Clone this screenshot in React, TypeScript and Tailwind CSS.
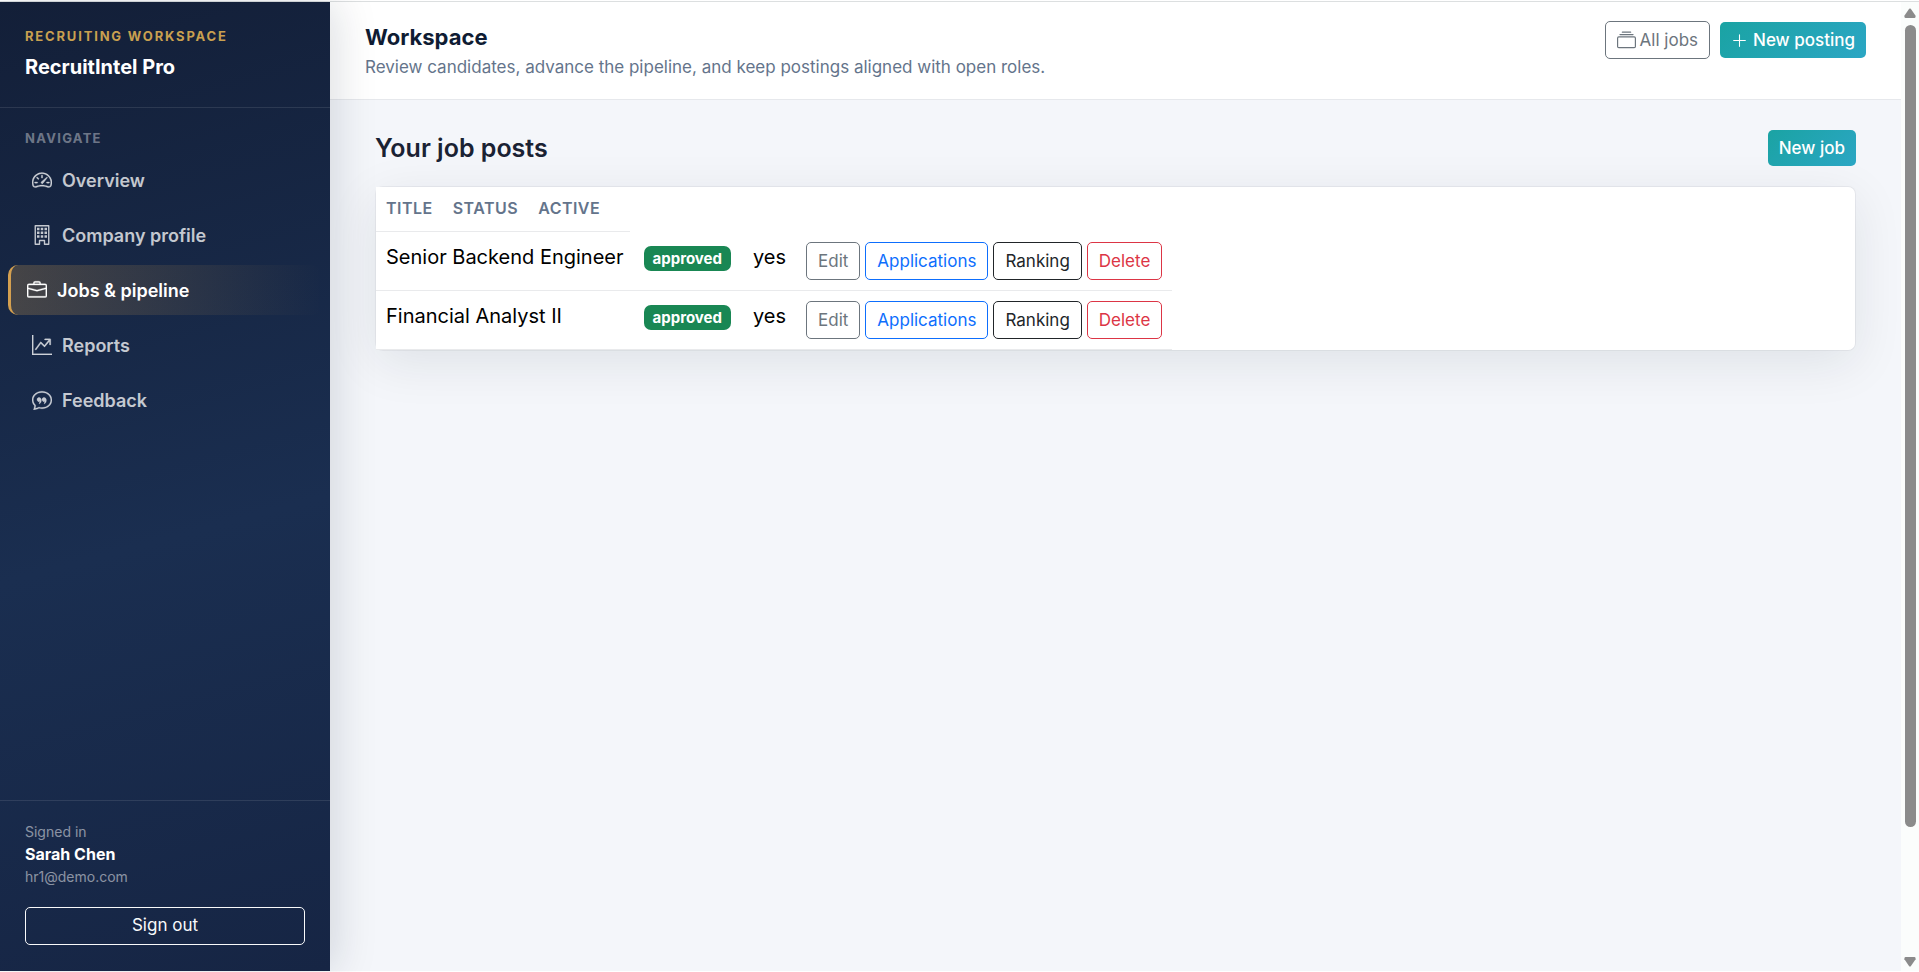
import type { ComponentType, ReactNode } from "react";
import {
  BsBriefcase,
  BsChatQuote,
  BsCollection,
  BsGraphUpArrow,
  BsPlusLg,
  BsSpeedometer2,
} from "react-icons/bs";

type IconProps = { size?: number; strokeWidth?: number };
type NavItem = { label: string; icon: ComponentType<IconProps>; active?: boolean };

function BuildingIcon({ size = 16 }: IconProps) {
  return (
    <svg width={size} height={size} viewBox="0 0 16 16" fill="none" stroke="currentColor">
      <path d="M2.6 .6H13.4V15.4H10V12.4H6V15.4H2.6Z" strokeWidth="1.1" strokeLinejoin="round" />
      <path
        d="M4 2.2h2v2H4zM7 2.2h2v2H7zM10 2.2h2v2h-2zM4 5.2h2v2H4zM7 5.2h2v2H7zM10 5.2h2v2h-2zM4 8.2h2v2H4zM7 8.2h2v2H7zM10 8.2h2v2h-2z"
        fill="currentColor"
        stroke="none"
      />
    </svg>
  );
}

const navItems: NavItem[] = [
  { label: "Overview", icon: BsSpeedometer2 },
  { label: "Company profile", icon: BuildingIcon },
  { label: "Jobs & pipeline", icon: BsBriefcase, active: true },
  { label: "Reports", icon: BsGraphUpArrow },
  { label: "Feedback", icon: BsChatQuote },
];

const jobs = [
  { title: "Senior Backend Engineer", status: "approved", active: "yes" },
  { title: "Financial Analyst II", status: "approved", active: "yes" },
];

const outline = {
  gray: "border-[#6c757d] text-[#6c757d]",
  blue: "border-[#0d6efd] text-[#0d6efd]",
  dark: "border-[#212529] text-[#212529]",
  red: "border-[#dc3545] text-[#dc3545]",
};

function OutlineButton({ tone, children }: { tone: keyof typeof outline; children: ReactNode }) {
  return (
    <button
      type="button"
      className={`flex h-[38px] items-center gap-1 rounded-[5px] border px-[11px] text-[17px] leading-[26px] ${outline[tone]}`}
    >
      {children}
    </button>
  );
}

function PrimaryButton({ children }: { children: ReactNode }) {
  return (
    <button
      type="button"
      className="flex h-9 items-center gap-[5px] rounded-[5px] bg-linear-135 from-[#1aa3a3] to-[#2ba6c4] px-[11px] text-[17px] leading-[26px] font-medium text-white"
    >
      {children}
    </button>
  );
}

function Sidebar() {
  return (
    <aside className="relative z-10 flex w-[330px] shrink-0 flex-col bg-[linear-gradient(165deg,#131f38_0%,#1a2e50_55%,#162544_100%)] shadow-[5px_0_40px_rgba(15,28,46,0.15)]">
      <div className="border-b border-white/10 px-[25px] pt-6 pb-[25px]">
        <p className="text-[13px] leading-5 font-bold tracking-[0.14em] text-[#c9a050]">
          RECRUITING WORKSPACE
        </p>
        <p className="mt-1.5 text-[20px] leading-[30px] font-bold text-white">
          RecruitIntel Pro
        </p>
      </div>
      <nav aria-labelledby="nav-heading" className="flex-1 px-2 pt-5">
        <h2
          id="nav-heading"
          className="px-[17px] text-[13px] leading-5 font-bold tracking-[0.1em] text-white/40"
        >
          NAVIGATE
        </h2>
        <ul className="mt-[7px] flex flex-col gap-[5px]">
          {navItems.map(({ label, icon: Icon, active }) => (
            <li key={label}>
              <a
                href="#"
                aria-current={active ? "page" : undefined}
                className={
                  active
                    ? "flex h-[50px] items-center gap-2.5 rounded-[10px] border-l-[3px] border-[#d4a050] bg-linear-to-r from-[#d4a050]/25 to-transparent pl-4 text-[18px] font-semibold text-white"
                    : "flex h-[50px] items-center gap-2.5 rounded-[10px] pl-6 text-[18px] font-semibold text-white/75"
                }
              >
                <Icon size={20} strokeWidth={0.25} />
                {label}
              </a>
            </li>
          ))}
        </ul>
      </nav>
      <div className="border-t border-white/10 px-[25px] pt-5 pb-[26px]">
        <p className="text-[14px] leading-[22px] text-white/50">Signed in</p>
        <p className="text-[16px] leading-[23px] font-bold text-white">Sarah Chen</p>
        <p className="text-[14px] leading-[22px] text-white/50">hr1@demo.com</p>
        <button
          type="button"
          className="mt-[19px] h-[38px] w-full rounded-[5px] border border-[#f8f9fa] text-[17px] text-[#f8f9fa]"
        >
          Sign out
        </button>
      </div>
    </aside>
  );
}

function JobsTable() {
  return (
    <div className="rounded-lg border border-[#0f1c2e]/5 bg-white bg-clip-padding shadow-[0_12px_50px_rgba(15,28,46,0.09)]">
      <table className="block border-collapse text-left">
        <thead className="block text-[16px] leading-[22px] tracking-[0.03em] text-[#64748b]">
          <tr>
            {["TITLE", "STATUS", "ACTIVE", ""].map((heading) => (
              <th key={heading} className="border-b border-[#e9eaec] bg-white px-2.5 pt-2.5 pb-3 font-semibold">
                {heading}
              </th>
            ))}
          </tr>
        </thead>
        <tbody className="block text-[20px] leading-[30px] text-black">
          {jobs.map((job) => (
            <tr key={job.title} className="align-top">
              <td className="border-b border-[#e9eaec] bg-white p-2.5">{job.title}</td>
              <td className="border-b border-[#e9eaec] py-2.5 pr-3 pl-2.5">
                <span className="inline-block rounded-[7px] bg-[#198754] px-[9px] py-1 align-middle text-[15px] leading-[17px] font-bold text-white">
                  {job.status}
                </span>
              </td>
              <td className="border-b border-[#e9eaec] p-2.5">{job.active}</td>
              <td className="border-b border-[#e9eaec] p-2.5">
                <div className="flex gap-[5px]">
                  <OutlineButton tone="gray">Edit</OutlineButton>
                  <OutlineButton tone="blue">Applications</OutlineButton>
                  <OutlineButton tone="dark">Ranking</OutlineButton>
                  <OutlineButton tone="red">Delete</OutlineButton>
                </div>
              </td>
            </tr>
          ))}
        </tbody>
      </table>
    </div>
  );
}

function ScrollTrack() {
  return (
    <div aria-hidden="true" className="flex w-[18px] shrink-0 flex-col items-center bg-[#fbfdfc] pt-1.5 pb-1">
      <svg viewBox="0 0 12 10" className="h-2.5 w-3" fill="#8b8b8b">
        <path d="M5.2 .8Q6 0 6.8 .8L11.6 7.8Q12 9.6 10.6 10H1.4Q0 9.6 .4 7.8Z" />
      </svg>
      <div className="mt-[7px] flex w-full flex-1 flex-col items-center">
        <div className="h-[86%] w-[11px] rounded-full bg-[#8b8b8b]" />
      </div>
      <svg viewBox="0 0 12 10" className="h-2.5 w-3" fill="#8b8b8b">
        <path d="M5.2 9.2Q6 10 6.8 9.2L11.6 2.2Q12 .4 10.6 0H1.4Q0 .4 .4 2.2Z" />
      </svg>
    </div>
  );
}

export default function App() {
  return (
    <div className="h-screen bg-white py-px font-['Inter',sans-serif]">
      <div className="flex h-full border-t border-[#dcdfe0]">
        <Sidebar />
        <div className="flex min-w-0 flex-1 flex-col bg-[#f4f6fa]">
          <header className="flex items-start justify-between border-b border-[#e6e8ec] bg-white px-[35px] pt-[19px] pb-[19px]">
            <div>
              <h1 className="text-[22px] leading-[33px] font-bold text-[#0f1c33]">Workspace</h1>
              <p className="text-[17px] leading-[26px] text-[#64748b]">
                Review candidates, advance the pipeline, and keep postings aligned with open roles.
              </p>
            </div>
            <div className="flex items-center gap-2.5">
              <OutlineButton tone="gray">
                <BsCollection size={19} />
                All jobs
              </OutlineButton>
              <PrimaryButton>
                <BsPlusLg size={17} />
                New posting
              </PrimaryButton>
            </div>
          </header>
          <main className="px-[45px] pt-[30px]">
            <div className="mb-5 flex items-center justify-between">
              <h2 className="text-[25px] leading-[30px] font-semibold text-[#1a2233]">Your job posts</h2>
              <PrimaryButton>New job</PrimaryButton>
            </div>
            <JobsTable />
          </main>
        </div>
        <ScrollTrack />
      </div>
    </div>
  );
}
